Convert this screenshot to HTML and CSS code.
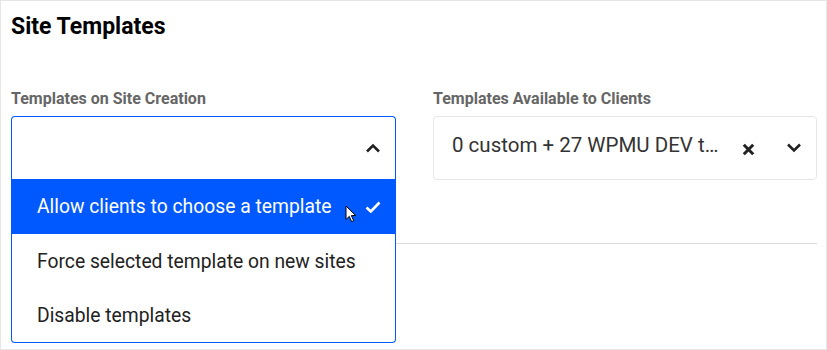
FILE: index.html
```html
<!DOCTYPE html>
<html lang="en">
<head>
    <meta charset="UTF-8">
    <meta name="viewport" content="width=device-width, initial-scale=1.0">
    <title>Site Templates</title>
    <link rel="stylesheet" href="styles.css">
</head>
<body>
    <div class="box">
        <h2 class="box-title">Site Templates</h2>

        <div class="fields">
            <div class="field">
                <label class="field-label">Templates on Site Creation</label>
                <div class="select open">
                    <div class="select-head">
                        <span class="select-value"></span>
                        <svg class="icon chevron" viewBox="0 0 16 10" width="16" height="10">
                            <path d="M2 8.5 L8 2.5 L14 8.5" fill="none" stroke="#222" stroke-width="2.6"/>
                        </svg>
                    </div>
                    <ul class="select-list">
                        <li class="option selected">
                            Allow clients to choose a template
                            <svg class="icon check" viewBox="0 0 16 12" width="16" height="12">
                                <path d="M1.5 6.5 L5.8 10.5 L14.5 1.5" fill="none" stroke="#fff" stroke-width="2.6"/>
                            </svg>
                            <svg class="cursor" viewBox="0 0 12 18" width="12" height="18">
                                <path d="M1 1 L1 14.5 L4.3 11.4 L6.6 16.6 L8.7 15.7 L6.4 10.6 L10.8 10.6 Z" fill="#fff" stroke="#000" stroke-width="1"/>
                            </svg>
                        </li>
                        <li class="option">Force selected template on new sites</li>
                        <li class="option">Disable templates</li>
                    </ul>
                </div>
            </div>

            <div class="field">
                <label class="field-label">Templates Available to Clients</label>
                <div class="select">
                    <div class="select-head">
                        <span class="select-value">0 custom + 27 WPMU DEV t…</span>
                        <svg class="icon clear" viewBox="0 0 13 13" width="13" height="13">
                            <path d="M1.8 1.8 L11.2 11.2 M11.2 1.8 L1.8 11.2" fill="none" stroke="#222" stroke-width="3"/>
                        </svg>
                        <svg class="icon chevron" viewBox="0 0 16 10" width="16" height="10">
                            <path d="M2 1.5 L8 7.5 L14 1.5" fill="none" stroke="#222" stroke-width="2.6"/>
                        </svg>
                    </div>
                </div>
            </div>
        </div>

        <hr class="divider">
    </div>
</body>
</html>
```

FILE: styles.css
```css
* {
    box-sizing: border-box;
}
body {
    margin: 0;
    font-family: Roboto, "Liberation Sans", Arial, sans-serif;
    background-color: #fff;
}
.box {
    width: 827px;
    height: 350px;
    border: 1px solid #e6e6e6;
    padding: 0 9px 0 10px;
    overflow: hidden;
}
.box-title {
    margin: 0;
    padding-top: 13px;
    font-size: 23px;
    line-height: 26px;
    font-weight: 700;
    color: #000;
}
.fields {
    display: grid;
    grid-template-columns: 385px 384px;
    column-gap: 37px;
    margin-top: 50px;
}
.field-label {
    display: block;
    font-size: 16px;
    line-height: 18px;
    font-weight: 700;
    color: #666;
    margin-bottom: 8px;
}
.select {
    position: relative;
    border: 1px solid #e6e6e6;
    border-radius: 4px;
    background-color: #fff;
}
.select.open {
    border-color: #0059ff;
    border-bottom-left-radius: 0;
    border-bottom-right-radius: 0;
    border-bottom: none;
}
.select-head {
    display: flex;
    align-items: center;
    height: 62px;
    padding: 0 14px 0 18px;
}
.select-value {
    flex: 1;
    font-size: 20.5px;
    line-height: 24px;
    color: #333;
    white-space: nowrap;
    overflow: hidden;
    margin-bottom: 6px;
}
.icon {
    display: block;
    flex-shrink: 0;
}
.clear {
    margin-right: 31px;
    margin-top: 2px;
}
.select-list {
    position: absolute;
    left: -1px;
    right: -1px;
    top: 62px;
    margin: 0;
    padding: 0;
    list-style: none;
    background-color: #fff;
    border: 1px solid #0059ff;
    border-top: none;
    border-radius: 0 0 4px 4px;
    z-index: 2;
}
.option {
    position: relative;
    display: flex;
    align-items: center;
    height: 54px;
    padding: 0 14px 0 25px;
    font-size: 19.3px;
    color: #222;
}
.option.selected {
    height: 55px;
    background-color: #0059ff;
    color: #fff;
}
.check {
    margin-left: auto;
}
.cursor {
    position: absolute;
    left: 333px;
    top: 26px;
}
.divider {
    margin: 63px 0 0;
    border: none;
    border-top: 1px solid #ddd;
}
```
